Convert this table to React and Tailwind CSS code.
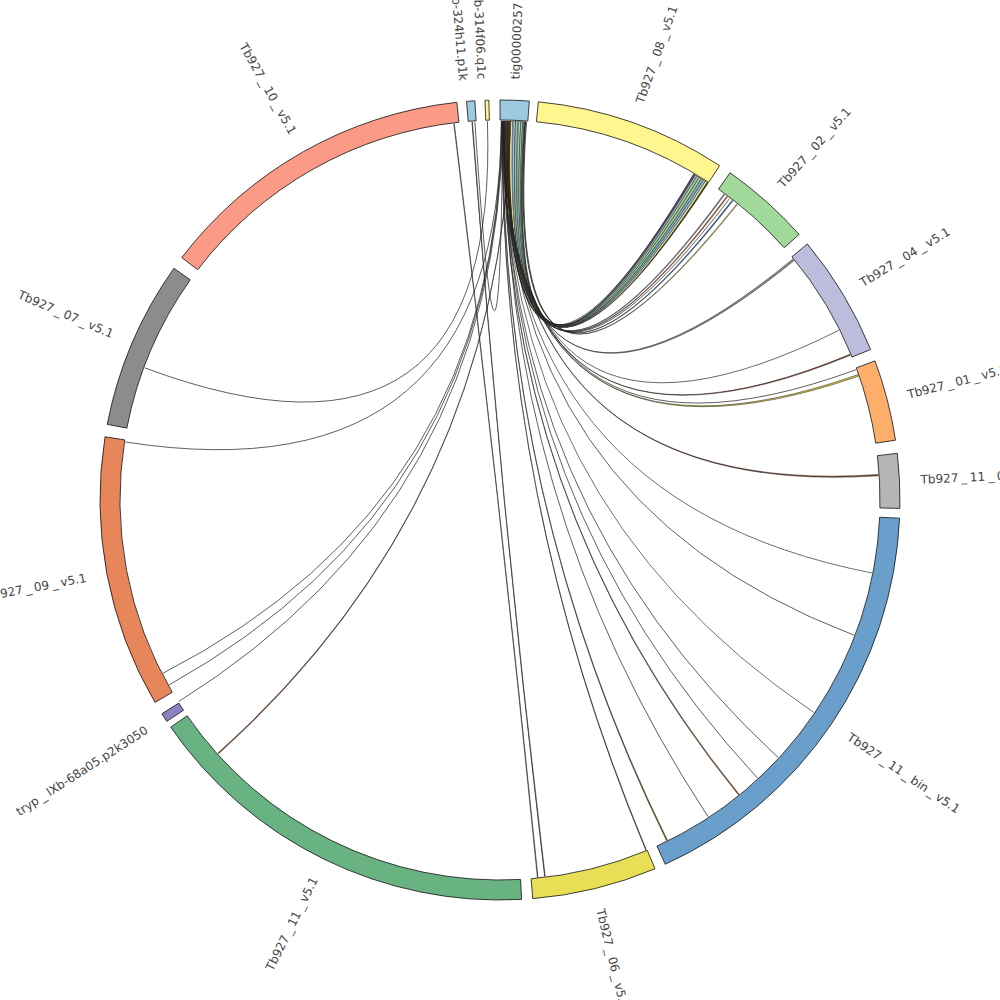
import React from "react";

const C = 500;
const RO = 400;
const RI = 380;
const RL = 379;

function pt(r, a) {
  const t = (a * Math.PI) / 180;
  return [C + r * Math.sin(t), C - r * Math.cos(t)];
}
const f = (p) => `${p[0].toFixed(2)} ${p[1].toFixed(2)}`;

const segments = [
  { name: "tig00000257", a: 0, b: 4.2, c: "#9ecae1" },
  { name: "Tb927_08_v5.1", a: 5.5, b: 33.3, c: "#fff68f" },
  { name: "Tb927_02_v5.1", a: 35.1, b: 48.4, c: "#a1d99b" },
  { name: "Tb927_04_v5.1", a: 50.2, b: 67.9, c: "#bcbddc" },
  { name: "Tb927_01_v5.1", a: 69.65, b: 81.4, c: "#fdae6b" },
  { name: "Tb927_11_01_v5.1", a: 83.3, b: 91.2, c: "#b5b5b5" },
  { name: "Tb927_11_bin_v5.1", a: 92.6, b: 155.6, c: "#6a9fcc" },
  { name: "Tb927_06_v5.1", a: 157.2, b: 175.3, c: "#e9df56" },
  { name: "Tb927_11_v5.1", a: 176.9, b: 235.4, c: "#69b282" },
  { name: "tryp_IXb-68a05.p2k3050", a: 236.4, b: 237.7, c: "#8e80bf" },
  { name: "Tb927_09_v5.1", a: 239.6, b: 279.1, c: "#e6865a" },
  { name: "Tb927_07_v5.1", a: 280.9, b: 305.4, c: "#8c8c8c" },
  { name: "Tb927_10_v5.1", a: 307.3, b: 353.8, c: "#fb9a86" },
  { name: "tryp_IXb-324h11.p1k", a: 355.2, b: 356.4, c: "#9ecae1", la: 355.0 },
  { name: "tryp_IXb-314f06.q1c", a: 357.85, b: 358.4, c: "#fff68f", la: 357.5 },
];

// ribbons: [a1, a2, b1, b2, fill]
const ribbons = [
  // bundle tig -> Tb927_08
  [1.0, 1.25, 33.1, 33.3, "#3a3a2a"],
  [1.55, 1.9, 32.8, 33.1, "#fff68f"],
  [2.0, 2.35, 32.45, 32.75, "#9ecae1"],
  [2.35, 2.7, 32.1, 32.4, "#8fbfdc"],
  [2.8, 3.15, 31.7, 32.05, "#a1d99b"],
  [3.15, 3.45, 31.3, 31.65, "#a1d99b"],
  [3.45, 3.65, 31.0, 31.25, "#bcbddc"],
  [3.65, 3.85, 30.7, 30.95, "#55556a"],
  // tig -> Tb927_02
  [1.25, 1.32, 36.2, 36.35, "#9a97b0"],
  [1.35, 1.42, 36.75, 36.9, "#e6803a"],
  [3.85, 3.92, 37.75, 37.9, "#3d7fbf"],
  [3.95, 4.02, 38.65, 38.78, "#f3ea6a"],
  // tig -> Tb927_04 / 01
  [0.9, 0.97, 50.55, 50.85, "#8e8e8e"],
  [0.8, 0.84, 67.4, 67.55, "#9a4a2a"],
  [0.7, 0.76, 70.7, 70.95, "#d8cc3a"],
  // tig -> Tb927_11_01
  [0.6, 0.64, 86.15, 86.35, "#8a4a30"],
  // tig -> Tb927_11_bin
  [0.5, 0.54, 140.9, 141.05, "#b06a38"],
  [0.4, 0.44, 153.8, 153.95, "#7d7820"],
  [0.3, 0.34, 157.3, 157.4, "#3d5a7a"],
  // top -> Tb927_06
  [353.0, 353.08, 174.25, 174.35, "#8d8a3a"],
  [355.75, 355.83, 173.15, 173.25, "#4a3d70"],
  // left side
  [1.6, 1.64, 227.95, 228.1, "#9a4a24"],
];

const lines = [
  [1.45, 37.3, "#1a1a1a"],
  [1.1, 63.4, "#2a2a2a"],
  [1.15, 69.9, "#1a1a1a"],
  [0.35, 101.1, "#1e3a2a"],
  [0.45, 110.9, "#1a1a1a"],
  [0.55, 124.1, "#2a3a30"],
  [0.6, 132.8, "#1a1a1a"],
  [0.65, 137.2, "#1a1a1a"],
  [0.75, 146.7, "#1a1a1a"],
  [358.1, 290.4, "#1a1a1a"],
  [0.2, 278.8, "#1a1a1a"],
  [0.25, 242.8, "#1a1a1a"],
  [0.32, 240.8, "#1a1a1a"],
  [0.42, 237.9, "#1a1a1a"],
  [356.2, 0.4, "#1a1a1a"],
  [2.2, 31.5, "#2a2a2a"],
  [3.0, 32.2, "#2a3a2a"],
  [1.3, 30.8, "#1a1a1a"],
];

function segPath(a1, a2) {
  const large = a2 - a1 > 180 ? 1 : 0;
  return `M ${f(pt(RO, a1))} A ${RO} ${RO} 0 ${large} 1 ${f(pt(RO, a2))} L ${f(
    pt(RI, a2)
  )} A ${RI} ${RI} 0 ${large} 0 ${f(pt(RI, a1))} Z`;
}

function ribbonPath(a1, a2, b1, b2) {
  return `M ${f(pt(RL, a1))} A ${RL} ${RL} 0 0 1 ${f(pt(RL, a2))} Q ${C} ${C} ${f(
    pt(RL, b1)
  )} A ${RL} ${RL} 0 0 1 ${f(pt(RL, b2))} Q ${C} ${C} ${f(pt(RL, a1))} Z`;
}

function linePath(a, b) {
  return `M ${f(pt(RL, a))} Q ${C} ${C} ${f(pt(RL, b))}`;
}

function Label({ name, angle }) {
  const right = angle < 180;
  const rot = right ? angle - 90 : angle + 90;
  const parts = name.split("_");
  const kids = [];
  parts.forEach((p, i) => {
    if (i > 0) {
      kids.push(
        <tspan key={"u" + i} dx="2.8">
          _
        </tspan>
      );
      kids.push(
        <tspan key={"p" + i} dx="2.8">
          {p}
        </tspan>
      );
    } else {
      kids.push(<tspan key={"p" + i}>{p}</tspan>);
    }
  });
  return (
    <text
      transform={`translate(${C} ${C}) rotate(${rot.toFixed(2)})`}
      x={right ? 421 : -421}
      y={0}
      dominantBaseline="central"
      textAnchor={right ? "start" : "end"}
      className="font-['DejaVu_Sans'] text-[12px] fill-[#454545]"
    >
      {kids}
    </text>
  );
}

export default function App() {
  return (
    <div className="w-[1000px] h-[1000px] bg-white overflow-hidden">
      <svg width="1000" height="1000" viewBox="0 0 1000 1000" className="block">
        <g>
          {lines.map((l, i) => (
            <path
              key={"l" + i}
              d={linePath(l[0], l[1])}
              fill="none"
              stroke={l[2]}
              strokeWidth="0.7"
            />
          ))}
          {ribbons.map((r, i) => (
            <path
              key={"r" + i}
              d={ribbonPath(r[0], r[1], r[2], r[3])}
              fill={r[4]}
              stroke="#1a1a1a"
              strokeWidth="0.5"
            />
          ))}
        </g>
        <g>
          {segments.map((s) => (
            <path
              key={s.name}
              d={segPath(s.a, s.b)}
              fill={s.c}
              stroke="#111"
              strokeWidth="0.8"
            />
          ))}
        </g>
        <g>
          {segments.map((s) => (
            <Label
              key={"t" + s.name}
              name={s.name}
              angle={s.la !== undefined ? s.la : (s.a + s.b) / 2}
            />
          ))}
        </g>
      </svg>
    </div>
  );
}
